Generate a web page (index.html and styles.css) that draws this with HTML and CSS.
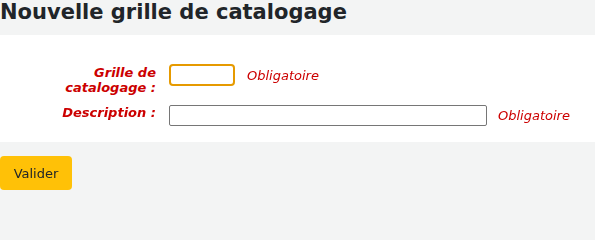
FILE: index.html
```html
<!DOCTYPE html>
<html lang="fr">
<head>
<meta charset="utf-8">
<title>Nouvelle grille de catalogage</title>
<link rel="stylesheet" href="styles.css">
</head>
<body>
<h1 class="page-title">Nouvelle grille de catalogage</h1>
<form class="form">
  <fieldset class="panel">
    <ol class="fields">
      <li class="field">
        <label class="field-label" for="code">Grille de catalogage :</label>
        <input class="input input-short" id="code" type="text" autofocus>
        <span class="required">Obligatoire</span>
      </li>
      <li class="field">
        <label class="field-label" for="desc">Description :</label>
        <input class="input input-long" id="desc" type="text">
        <span class="required required-long">Obligatoire</span>
      </li>
    </ol>
  </fieldset>
  <div class="actions">
    <button class="btn-primary" type="button">Valider</button>
  </div>
</form>
</body>
</html>
```
FILE: styles.css
```css
html, body {
  margin: 0;
  padding: 0;
  background: #f3f4f4;
  font-family: "DejaVu Sans", sans-serif;
  color: #212529;
}
.page-title {
  margin: 0;
  font-size: 21px;
  line-height: 25px;
  font-weight: bold;
  padding-bottom: 10px;
  color: #212529;
}
.form {
  margin: 0;
}
.panel {
  margin: 0;
  border: 0;
  background: #fff;
  padding: 28px 0 16px 0;
}
.fields {
  list-style: none;
  margin: 0;
  padding: 0;
}
.field {
  display: flex;
  align-items: flex-start;
  margin-bottom: 8px;
}
.field:last-child {
  margin-bottom: 0;
}
.field-label {
  width: 169px;
  text-align: right;
  font-size: 13px;
  line-height: 15px;
  font-weight: bold;
  font-style: italic;
  color: #cc0000;
  padding-top: 2px;
  padding-left: 56px;
  padding-right: 13px;
  box-sizing: border-box;
  flex: none;
}
.input {
  box-sizing: border-box;
  height: 21px;
  margin: 0;
  font-family: "DejaVu Sans", sans-serif;
  font-size: 13px;
  background: #fff;
  border: 1px solid #767676;
  border-radius: 2px;
  padding: 1px 2px;
  flex: none;
}
.input-short {
  width: 66px;
  height: 22px;
  margin-top: 1px;
  border: 2px solid #e69a00;
  border-radius: 4px;
  outline: none;
  caret-color: #aa0000;
}
.input-long {
  width: 318px;
  margin-top: 2px;
}
.input:focus {
  outline: none;
  border: 2px solid #e69a00;
  border-radius: 4px;
}
.required {
  margin-left: 12px;
  font-size: 13px;
  line-height: 15px;
  font-style: italic;
  color: #cc0000;
  padding-top: 5px;
}
.required-long {
  margin-left: 11px;
}
.actions {
  padding-top: 14px;
}
.btn-primary {
  display: block;
  background: #ffc107;
  border: 0;
  border-radius: 4px;
  height: 34px;
  width: 72px;
  font-family: "DejaVu Sans", sans-serif;
  font-size: 13px;
  color: #212529;
  padding: 0;
}
```
